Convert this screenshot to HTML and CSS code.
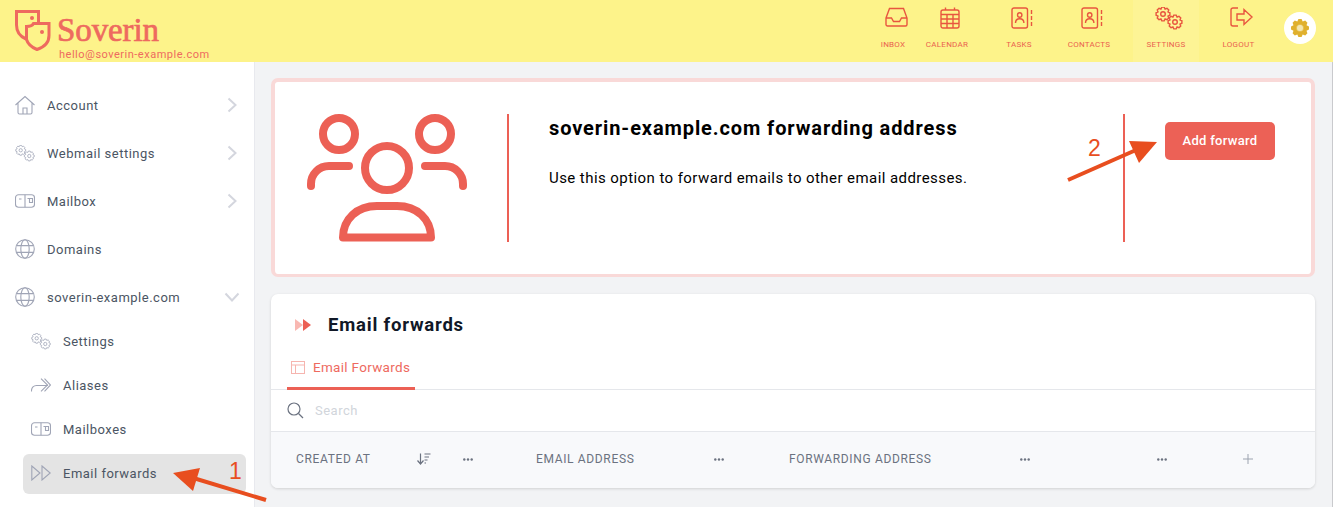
FILE: index.html
```html
<!DOCTYPE html>
<html lang="en">
<head>
    <meta charset="UTF-8">
    <meta name="viewport" content="width=device-width, initial-scale=1.0">
    <title>Email forwards - Soverin</title>
    <link rel="stylesheet" href="styles.css">
</head>
<body>

    <svg class="defs" width="0" height="0">
        <symbol id="gear" viewBox="-8 -8 16 16" overflow="visible">
            <polygon points="6.9,-1.2 6.9,1.2 5,2.07 5.73,4.01 4.01,5.73 2.07,5 1.2,6.9 -1.2,6.9 -2.07,5 -4.01,5.73 -5.73,4.01 -5,2.07 -6.9,1.2 -6.9,-1.2 -5,-2.07 -5.73,-4.01 -4.01,-5.73 -2.07,-5 -1.2,-6.9 1.2,-6.9 2.07,-5 4.01,-5.73 5.73,-4.01 5,-2.07"/>
            <circle r="2.3"/>
        </symbol>
        <symbol id="gears" viewBox="0 0 28 23">
            <use href="#gear" x="0" y="-1" width="16" height="16"/>
            <use href="#gear" x="12" y="7" width="16" height="16"/>
        </symbol>
        <symbol id="globe" viewBox="0 0 20 20">
            <circle cx="10" cy="10" r="9.3"/>
            <ellipse cx="10" cy="10" rx="4.2" ry="9.3"/>
            <path d="M1.5 6.6h17M1.5 13.4h17"/>
        </symbol>
        <symbol id="mailbox" viewBox="0 0 20 14">
            <rect x="0.5" y="0.7" width="19" height="12.6" rx="3"/>
            <path d="M10 0.7v12.6M4 5h2.5M12.5 4.5h5v4h-3v-4"/>
        </symbol>
        <symbol id="chevron" viewBox="0 0 10 16">
            <path d="M1.5 1.5 8.5 8l-7 6.5"/>
        </symbol>
        <symbol id="book" viewBox="0 0 22 22">
            <rect x="1" y="1" width="15.5" height="20" rx="2"/>
            <circle cx="8.7" cy="8" r="2.2"/>
            <path d="M4.5 16c0-3 1.8-4.2 4.2-4.2s4.2 1.2 4.2 4.2M20.5 3v4M20.5 9v4M20.5 15v4"/>
        </symbol>
        <symbol id="dots" viewBox="0 0 10 3">
            <circle cx="1.3" cy="1.5" r="1.2"/>
            <circle cx="5" cy="1.5" r="1.2"/>
            <circle cx="8.7" cy="1.5" r="1.2"/>
        </symbol>
    </svg>

    <header class="topbar">
        <div class="brand">
            <svg class="brand-icon" viewBox="0 0 36 41">
                <path d="M11 29C4 26 1.500 21 1.500 15V1.500h22V13"/>
                <path d="M11.500 16.500c4 0 6-1 7-3h15.500v12c0 6-3 11-12 14-5-2-9-5-10.500-10v-13z"/>
                <circle class="brand-dot" cx="17" cy="8" r="2"/>
                <circle class="brand-dot" cx="27" cy="22" r="2"/>
            </svg>
            <div class="brand-text">
                <div class="brand-name">Soverin</div>
                <div class="brand-mail">hello@soverin-example.com</div>
            </div>
        </div>

        <nav class="topnav">
            <a class="nav-item">
                <svg class="nav-icon" width="23" height="20" viewBox="0 0 23 20"><path d="M1 11 4.500 1.500h14L22 11v6.500a1.500 1.500 0 0 1-1.500 1.500h-18A1.500 1.500 0 0 1 1 17.500zM1 11h5.500l2 3.500h6l2-3.500H22"/></svg>
                <span>Inbox</span>
            </a>
            <a class="nav-item">
                <svg class="nav-icon" width="20" height="22" viewBox="0 0 20 22"><rect x="1" y="3" width="18" height="18" rx="2"/><path d="M5.500 0.500V3M14.500 0.500V3M1 7.500h18M1 12h18M1 16.500h18M7 7.500V21M13 7.500V21"/></svg>
                <span>Calendar</span>
            </a>
            <a class="nav-item">
                <svg class="nav-icon" width="22" height="22"><use href="#book"/></svg>
                <span>Tasks</span>
            </a>
            <a class="nav-item">
                <svg class="nav-icon" width="22" height="22"><use href="#book"/></svg>
                <span>Contacts</span>
            </a>
            <a class="nav-item nav-active">
                <svg class="nav-icon" width="28" height="23"><use href="#gears"/></svg>
                <span>Settings</span>
            </a>
            <a class="nav-item">
                <svg class="nav-icon" width="23" height="20" viewBox="0 0 23 20"><path d="M8 1H3a2 2 0 0 0-2 2v14a2 2 0 0 0 2 2h5M7 7h7V2.500L22 10l-8 7.500V13H7z"/></svg>
                <span>Logout</span>
            </a>
        </nav>

        <div class="theme-toggle">
            <svg class="theme-gear" width="20" height="20" viewBox="-10 -10 20 20">
                <use href="#gear" x="-8" y="-8" width="16" height="16" transform="scale(1.3)"/>
                <circle r="3.600"/>
            </svg>
        </div>
    </header>

    <div class="layout">
        <aside class="sidebar">
            <a class="side-item">
                <svg class="side-icon" width="20" height="20" viewBox="0 0 20 20"><path d="M0.500 10 10 1.500l9.500 8.500M3 8v9.500a1.500 1.500 0 0 0 1.500 1.500h11a1.500 1.500 0 0 0 1.500-1.500V8M8 19v-6h4v6"/></svg>
                <span>Account</span>
                <svg class="chevron" width="10" height="16"><use href="#chevron"/></svg>
            </a>
            <a class="side-item">
                <svg class="side-icon" width="20" height="17"><use href="#gears"/></svg>
                <span>Webmail settings</span>
                <svg class="chevron" width="10" height="16"><use href="#chevron"/></svg>
            </a>
            <a class="side-item">
                <svg class="side-icon" width="20" height="14"><use href="#mailbox"/></svg>
                <span>Mailbox</span>
                <svg class="chevron" width="10" height="16"><use href="#chevron"/></svg>
            </a>
            <a class="side-item">
                <svg class="side-icon" width="20" height="20"><use href="#globe"/></svg>
                <span>Domains</span>
            </a>
            <a class="side-item">
                <svg class="side-icon" width="20" height="20"><use href="#globe"/></svg>
                <span>soverin-example.com</span>
                <svg class="chevron chevron-down" width="10" height="16"><use href="#chevron"/></svg>
            </a>

            <div class="side-sub">
                <a class="sub-item">
                    <svg class="side-icon" width="20" height="17"><use href="#gears"/></svg>
                    <span>Settings</span>
                </a>
                <a class="sub-item">
                    <svg class="side-icon" width="20" height="14" viewBox="0 0 20 14"><path d="M0.500 13.500v-1a5 5 0 0 1 5-5H17M10 0.700 16.500 7 10 13.300M13.500 0.700l6 6.300-6 6.300"/></svg>
                    <span>Aliases</span>
                </a>
                <a class="sub-item">
                    <svg class="side-icon" width="20" height="14"><use href="#mailbox"/></svg>
                    <span>Mailboxes</span>
                </a>
                <a class="sub-item active">
                    <svg class="side-icon" width="20" height="16" viewBox="0 0 20 16"><path d="M0.800 1 9 8l-8.200 7zM11 1l8.200 7L11 15z"/></svg>
                    <span>Email forwards</span>
                </a>
            </div>
        </aside>

        <main class="content">
            <section class="hero">
                <div class="hero-art">
                    <svg class="hero-icon" width="160" height="128" viewBox="0 0 160 128">
                        <circle cx="32" cy="20" r="16"/>
                        <circle cx="128" cy="20" r="16"/>
                        <circle cx="80" cy="54" r="22"/>
                        <path d="M4 72v-2a18 18 0 0 1 18-18h20M156 72v-2a18 18 0 0 0-18-18h-20"/>
                        <path d="M36 123.500C36 105 50 92 70 92h20c20 0 34 13 34 31.500z"/>
                    </svg>
                </div>
                <div class="hero-text">
                    <h1>soverin-example.com forwarding address</h1>
                    <p>Use this option to forward emails to other email addresses.</p>
                </div>
                <div class="hero-action">
                    <button type="button">Add forward</button>
                </div>
            </section>

            <section class="panel">
                <div class="panel-title">
                    <svg width="16" height="12" viewBox="0 0 16 12"><path class="tri-light" d="M0 0l8 6-8 6z"/><path class="tri-dark" d="M8 0l8 6-8 6z"/></svg>
                    <h2>Email forwards</h2>
                </div>
                <div class="tabs">
                    <a class="tab">
                        <svg width="14" height="13" viewBox="0 0 14 13"><rect x="0.500" y="0.500" width="13" height="12"/><path d="M0.500 4h13M4.500 4v8.500"/></svg>
                        Email Forwards
                    </a>
                </div>
                <div class="search">
                    <svg width="17" height="17" viewBox="0 0 17 17"><circle cx="7" cy="7" r="6"/><path d="M11.500 11.500 16 16"/></svg>
                    <span>Search</span>
                </div>
                <div class="table-head">
                    <div class="col col-first">
                        <span>Created at</span>
                        <div class="col-tools">
                            <svg class="sort" width="14" height="12" viewBox="0 0 14 12"><path d="M3.500 0.500v10M0.500 7.500l3 3.500 3-3.500M7.500 1h6M7.500 4h4.500M7.500 7h3M7.500 10h1.500"/></svg>
                            <svg class="dots" width="10" height="3"><use href="#dots"/></svg>
                        </div>
                    </div>
                    <div class="col">
                        <span>Email address</span>
                        <svg class="dots" width="10" height="3"><use href="#dots"/></svg>
                    </div>
                    <div class="col">
                        <span>Forwarding address</span>
                        <svg class="dots" width="10" height="3"><use href="#dots"/></svg>
                    </div>
                    <div class="col">
                        <span></span>
                        <svg class="dots" width="10" height="3"><use href="#dots"/></svg>
                    </div>
                    <div class="col col-add">
                        <svg class="plus" width="10" height="10" viewBox="0 0 10 10"><path d="M5 0v10M0 5h10"/></svg>
                    </div>
                </div>
            </section>
        </main>
    </div>

    <!-- arrows drawn over the screenshot -->
    <svg class="notes" width="1333" height="507" viewBox="0 0 1333 507">
        <path class="note-line" d="M266 500 190 477"/>
        <polygon class="note-head" points="173,473 200,468 193,491"/>
        <text x="229" y="479">1</text>
        <path class="note-line" d="M1068 180 1136 150"/>
        <polygon class="note-head" points="1157,142 1129,141 1139,163"/>
        <text x="1088" y="156">2</text>
    </svg>

</body>
</html>
```

FILE: styles.css
```css
* {
    box-sizing: border-box;
}

html, body {
    height: 100%;
}

body {
    margin: 0;
    height: 507px;
    overflow: hidden;
    position: relative;
    font-family: Roboto, "Liberation Sans", sans-serif;
    background-color: #f2f3f5;
    color: #4b5563;
}

.defs {
    position: absolute;
}

/* Top bar */
.topbar {
    height: 62px;
    display: flex;
    background-color: #fdf38a;
}

.brand {
    display: flex;
    padding: 10px 0 0 15px;
    width: 866px;
}

.brand-icon {
    width: 36px;
    height: 41px;
    fill: none;
    stroke: #ee6a5f;
    stroke-width: 3;
}

.brand-dot {
    fill: #ee6a5f;
    stroke: none;
}

.brand-text {
    margin-left: 6px;
    color: #ee6a5f;
}

.brand-name {
    font-family: "Liberation Serif", serif;
    font-size: 33px;
    line-height: 34px;
    letter-spacing: -0.1px;
    -webkit-text-stroke: 0.7px #ee6a5f;
    margin-top: 3px;
}

.brand-mail {
    font-size: 11px;
    line-height: 13px;
    letter-spacing: 0.5px;
    margin: 1px 0 0 2px;
    white-space: nowrap;
}

.topnav {
    display: grid;
    grid-template-columns: 54px 54px 90px 50px 85px 79px;
}

.nav-item {
    display: flex;
    flex-direction: column;
    align-items: center;
    height: 62px;
    color: #ea5f4f;
    font-size: 8px;
    letter-spacing: 0.25px;
    text-transform: uppercase;
}

.nav-item span {
    position: absolute;
    top: 39px;
    line-height: 11px;
}

.nav-active {
    margin-left: 19px;
    background-color: #fdf495;
}

.nav-icon {
    margin: 7px 0 0 6px;
    fill: none;
    stroke: #e8553f;
    stroke-width: 1.400;
}

.theme-toggle {
    width: 32px;
    height: 32px;
    margin: 12px 0 0 6px;
    border-radius: 50%;
    background-color: #fff;
    display: flex;
    align-items: center;
    justify-content: center;
}

.theme-gear {
    fill: #e0b02e;
}

.theme-gear > circle {
    fill: #f3e6b0;
    stroke: #e0b02e;
    stroke-width: 0.500;
}

/* Sidebar */
.layout {
    display: flex;
    height: 445px;
}

.sidebar {
    width: 255px;
    flex-shrink: 0;
    padding-top: 19px;
    background-color: #fff;
    border-right: 1px solid #e8e9ee;
}

.side-item {
    display: flex;
    align-items: center;
    height: 48px;
    padding: 0 17px 0 15px;
    font-size: 13px;
    letter-spacing: 0.5px;
}

.side-item span, .sub-item span {
    margin-left: 12px;
}

.side-icon {
    flex-shrink: 0;
    fill: none;
    stroke: #a0a5b6;
    stroke-width: 1.100;
}

.chevron {
    margin-left: auto;
    fill: none;
    stroke: #d4d6de;
    stroke-width: 2;
}

.chevron-down {
    transform: rotate(90deg);
}

.side-sub {
    margin: -2px 0 0 23px;
    width: 223px;
}

.sub-item {
    display: flex;
    align-items: center;
    height: 44px;
    padding-left: 8px;
    font-size: 13px;
    letter-spacing: 0.5px;
}

.sub-item.active {
    height: 40px;
    margin-top: 3px;
    padding-bottom: 2px;
    border-radius: 6px;
    background-color: #e4e4e4;
}

/* Main area */
.content {
    flex: 1;
    padding: 16px 17px 0 16px;
    border-right: 1px solid #c9cacd;
}

.hero {
    display: flex;
    height: 199px;
    padding: 32px 0;
    background-color: #fff;
    border: 4px solid #f9d9d8;
    border-bottom-width: 3px;
    border-radius: 7px;
}

.hero-art {
    width: 234px;
    padding-left: 32px;
    border-right: 2px solid #ec6055;
}

.hero-icon {
    display: block;
    fill: none;
    stroke: #ec6055;
    stroke-width: 8;
    stroke-linecap: round;
    stroke-linejoin: round;
}

.hero-text {
    width: 616px;
    padding-left: 40px;
    color: #000;
    border-right: 2px solid #ec6055;
}

.hero-text h1 {
    margin: 2px 0 0;
    font-size: 20px;
    line-height: 24px;
    font-weight: bold;
    letter-spacing: 0.9px;
}

.hero-text p {
    margin: 28px 0 0;
    font-size: 15px;
    line-height: 20px;
    letter-spacing: 0.43px;
}

.hero-action {
    padding: 8px 0 0 40px;
}

.hero-action button {
    width: 110px;
    height: 38px;
    padding-bottom: 3px;
    border: none;
    border-radius: 5px;
    background-color: #ec6156;
    color: #fff;
    font-family: inherit;
    font-size: 13px;
    font-weight: 500;
    letter-spacing: 0.3px;
}

.panel {
    margin-top: 17px;
    height: 194px;
    background-color: #fff;
    border-radius: 7px;
    box-shadow: 0 1px 3px rgba(0, 0, 0, 0.14);
    overflow: hidden;
}

.panel-title {
    display: flex;
    align-items: center;
    height: 61px;
    padding-left: 24px;
}

.panel-title h2 {
    margin: 0 0 0 17px;
    font-size: 18.500px;
    font-weight: bold;
    color: #111827;
    letter-spacing: 0.8px;
}

.tri-light {
    fill: #f9b8b2;
}

.tri-dark {
    fill: #ec6055;
}

.tabs {
    height: 35px;
    padding-left: 16px;
    border-bottom: 1px solid #e5e7eb;
}

.tab {
    display: inline-flex;
    align-items: center;
    gap: 8px;
    height: 35px;
    padding: 0 4px 8px;
    width: 128px;
    border-bottom: 3px solid #ec6055;
    color: #ee6a5f;
    font-size: 13.500px;
    letter-spacing: 0.3px;
    white-space: nowrap;
}

.tab svg {
    fill: none;
    stroke: #f6b5af;
    stroke-width: 1;
}

.search {
    display: flex;
    align-items: center;
    height: 42px;
    padding-left: 16px;
    border-bottom: 1px solid #e5e7eb;
    color: #d1d5db;
    font-size: 13px;
    letter-spacing: 0.5px;
}

.search svg {
    fill: none;
    stroke: #6b7280;
    stroke-width: 1.200;
    margin-right: 11px;
}

.table-head {
    display: grid;
    grid-template-columns: 240px 253px 306px 137px 108px;
    height: 56px;
    background-color: #f8f9fb;
    color: #6b7280;
    font-size: 12px;
    letter-spacing: 0.65px;
    text-transform: uppercase;
}

.col {
    display: flex;
    align-items: center;
    justify-content: space-between;
    padding: 0 40px 2px 25px;
}

.col-first {
    padding-right: 38px;
}

.col-tools {
    display: flex;
    align-items: center;
    gap: 32px;
}

.col-add {
    padding-left: 36px;
}

.dots {
    fill: #6b7280;
}

.sort {
    fill: none;
    stroke: #6b7280;
    stroke-width: 1.200;
}

.plus {
    fill: none;
    stroke: #9ca3af;
    stroke-width: 1;
}

/* Annotations */
.notes {
    position: absolute;
    top: 0;
    left: 0;
    pointer-events: none;
    font-family: "Liberation Sans", sans-serif;
    font-size: 23px;
}

.note-line {
    fill: none;
    stroke: #e84e1f;
    stroke-width: 4;
}

.note-head {
    fill: #e84e1f;
}

.notes text {
    fill: #e84e1f;
}
```
